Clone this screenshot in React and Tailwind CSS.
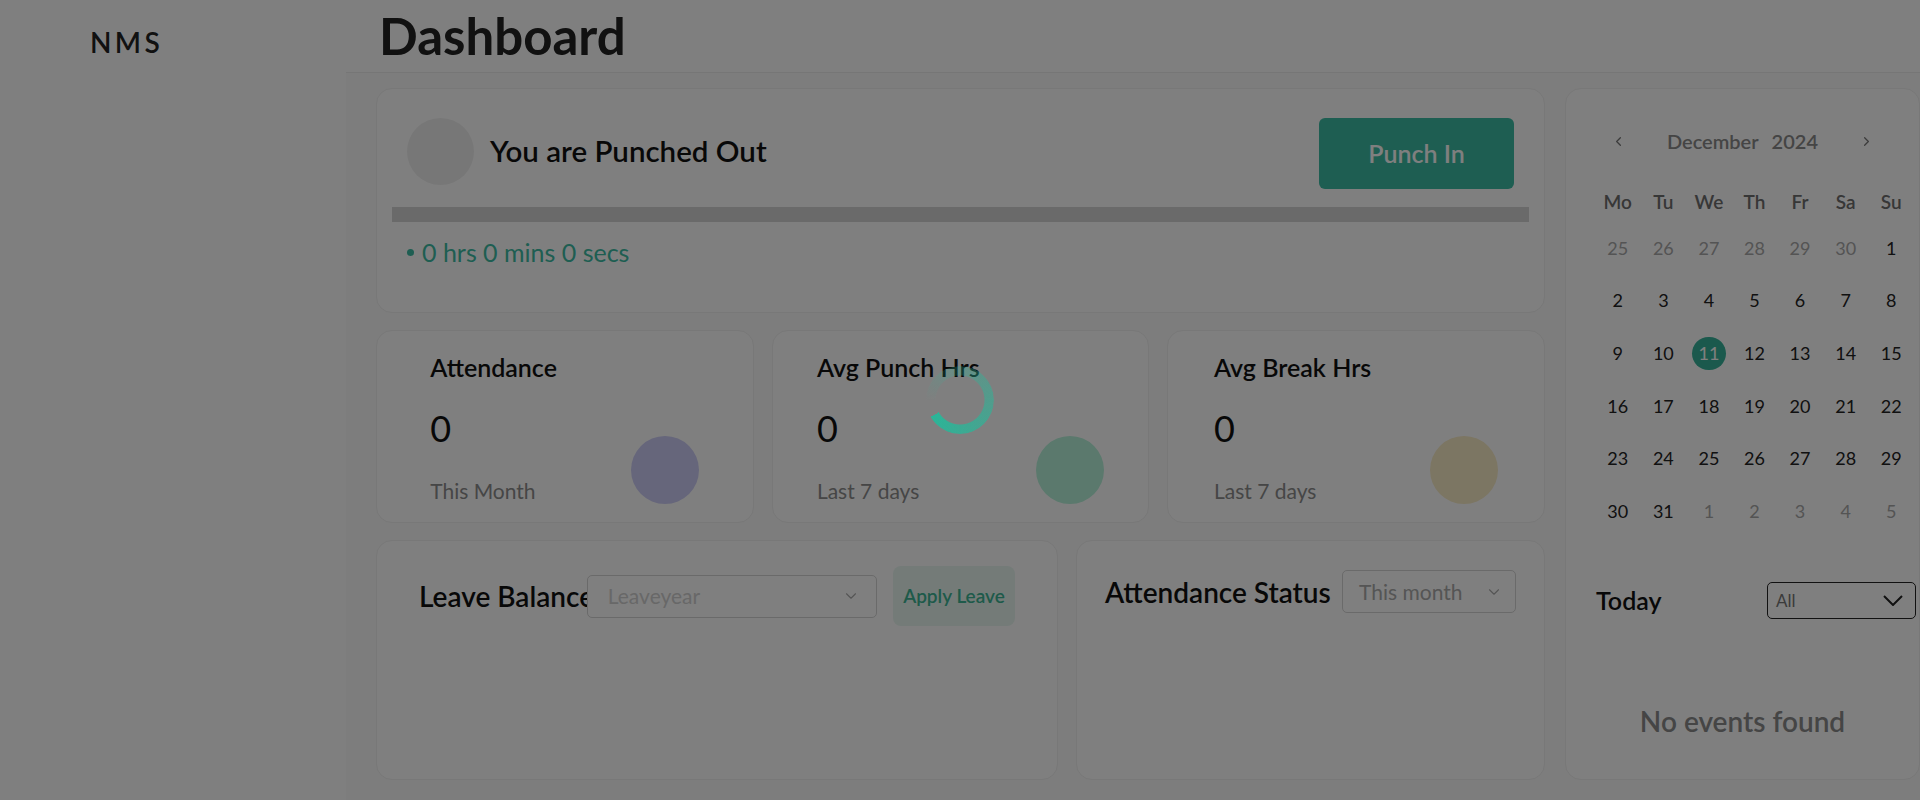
import React from "react";
import { ChevronDown, ChevronLeft, ChevronRight } from "lucide-react";

const weekDays = ["Mo", "Tu", "We", "Th", "Fr", "Sa", "Su"];

// december 2024, monday first
const calendarRows = [
  [[25, false], [26, false], [27, false], [28, false], [29, false], [30, false], [1, true]],
  [[2, true], [3, true], [4, true], [5, true], [6, true], [7, true], [8, true]],
  [[9, true], [10, true], [11, true], [12, true], [13, true], [14, true], [15, true]],
  [[16, true], [17, true], [18, true], [19, true], [20, true], [21, true], [22, true]],
  [[23, true], [24, true], [25, true], [26, true], [27, true], [28, true], [29, true]],
  [[30, true], [31, true], [1, false], [2, false], [3, false], [4, false], [5, false]],
];

const stats = [
  { title: "Attendance", value: "0", sub: "This Month", dot: "bg-[#cdcdf6]" },
  { title: "Avg Punch Hrs", value: "0", sub: "Last 7 days", dot: "bg-[#b6f2da]" },
  { title: "Avg Break Hrs", value: "0", sub: "Last 7 days", dot: "bg-[#f9ecc6]" },
];

const StatCard = ({ stat }) => (
  <div className="flex-1 rounded-2xl border border-[#f0f0f0] bg-white px-4 pt-6 pb-[18px] flex items-end justify-around">
    <div className="flex flex-col">
      <h3 className="text-[25px] leading-[30px] font-semibold text-[#111]">{stat.title}</h3>
      <p className="mt-[26px] text-[36px] leading-[40px] text-[#111]">{stat.value}</p>
      <p className="mt-[30px] text-[21px] leading-[26px] text-[#8c8c8c]">{stat.sub}</p>
    </div>
    <div className={`w-[68px] h-[68px] rounded-full ${stat.dot}`} />
  </div>
);

const PunchCard = () => (
  <div className="h-[225px] rounded-2xl border border-[#f0f0f0] bg-white px-[15px] pt-[24px]">
    <div className="flex items-center justify-between px-[15px]">
      <div className="flex items-center gap-[16px]">
        <div className="w-[67px] h-[67px] rounded-full bg-[#efefef]" />
        <span className="text-[29.5px] font-semibold text-[#111]">You are Punched Out</span>
      </div>
      <button className="mt-[5px] w-[195px] h-[71px] rounded-md bg-[#3cbca4] text-white text-[25px] font-semibold">
        Punch In
      </button>
    </div>
    <div className="mt-[18px] h-[15px] bg-[#d4d4d4]" />
    <div className="mt-[15px] px-[15px] flex items-center gap-2 text-[25px] leading-[30px] text-[#3cbca4]">
      <span className="w-[7px] h-[7px] rounded-full bg-[#3cbca4]" />
      <span>0 hrs 0 mins 0 secs</span>
    </div>
  </div>
);

const Calendar = () => (
  <div className="w-[355px] shrink-0 h-[692px] rounded-2xl border border-[#f0f0f0] bg-white pt-[36px]">
    <div className="h-8 flex items-center justify-center">
      <button className="w-[76px] flex justify-center text-[#777]">
        <ChevronLeft size={15} strokeWidth={2} />
      </button>
      <div className="w-[172px] flex justify-center gap-[13px] text-[20px] font-semibold text-[#8a8a8a]">
        <span>December</span>
        <span>2024</span>
      </div>
      <button className="w-[76px] flex justify-center text-[#777]">
        <ChevronRight size={15} strokeWidth={2} />
      </button>
    </div>
    <div className="ml-[29px] mt-[25px] w-[319px]">
      <div className="grid grid-cols-7 h-10 items-center text-center text-[19px] font-semibold text-[#6e6e6e]">
        {weekDays.map((d) => (
          <span key={d}>{d}</span>
        ))}
      </div>
      {calendarRows.map((row, i) => (
        <div key={i} className="grid grid-cols-7 h-[52.6px] items-center text-center text-[18px]">
          {row.map(([day, inMonth], j) => {
            const selected = inMonth && day === 11;
            return (
              <div key={j} className="flex justify-center">
                <span
                  className={
                    selected
                      ? "w-[34px] h-[33px] rounded-full bg-[#36b39a] text-white flex items-center justify-center"
                      : inMonth
                      ? "text-[#222]"
                      : "text-[#a8a8a8]"
                  }
                >
                  {day}
                </span>
              </div>
            );
          })}
        </div>
      ))}
    </div>
    <div className="mt-[44px] pl-[30px] pr-[3px] flex items-center justify-between">
      <span className="text-[25px] font-semibold text-[#111]">Today</span>
      <div className="w-[149px] h-[37px] rounded-[5px] border border-[#222] flex items-center justify-between pl-2 pr-3">
        <span className="text-[17px] text-[#777]">All</span>
        <svg width="20" height="11" viewBox="0 0 20 11" fill="none">
          <path d="M1 1l9 9 9-9" stroke="#222" strokeWidth="2" />
        </svg>
      </div>
    </div>
    <p className="mt-[84px] text-center text-[28px] leading-9 font-semibold text-[#8a8a8a]">No events found</p>
  </div>
);

const App = () => {
  return (
    <div className="relative flex w-[1920px] h-[800px] overflow-hidden bg-white font-['Lato',sans-serif]">
      <aside className="w-[346px] shrink-0 bg-white pl-[90px] pt-[24px]">
        <div className="text-[28px] leading-9 font-semibold tracking-[0.12em] text-[#222]">NMS</div>
      </aside>

      <main className="flex-1 min-w-0 flex flex-col">
        <header className="h-[73px] shrink-0 border-b border-[#ececec] pl-[33px] flex items-center">
          <h1 className="text-[51px] leading-[60px] font-bold text-[#222]">Dashboard</h1>
        </header>

        <div className="flex-1 bg-[#fafafa] pl-[30px] pt-[15px] flex gap-5">
          <div className="w-[1169px] shrink-0 flex flex-col gap-[17px]">
            <PunchCard />

            <div className="h-[193px] flex gap-[18px]">
              {stats.map((s) => (
                <StatCard key={s.title} stat={s} />
              ))}
            </div>

            <div className="h-[240px] flex gap-[18px]">
              <div className="w-[682px] rounded-2xl border border-[#f0f0f0] bg-white px-[42px] pt-[25px]">
                <div className="flex items-center">
                  <div className="w-[169px] overflow-hidden whitespace-nowrap text-[28px] font-semibold text-[#111]">
                    Leave Balance
                  </div>
                  <div className="w-[292px] h-[43px] rounded-[5px] border border-[#d4d4d4] bg-white flex items-center justify-between pl-5 pr-4">
                    <span className="text-[21px] text-[#d0d0d0]">Leaveyear</span>
                    <ChevronDown size={18} strokeWidth={1.5} className="text-[#aaa]" />
                  </div>
                  <button className="ml-4 w-[123px] h-[60px] rounded-lg bg-[#e8f7f1] text-[19px] font-semibold text-[#3cb594]">
                    Apply Leave
                  </button>
                </div>
              </div>

              <div className="flex-1 rounded-2xl border border-[#f0f0f0] bg-white px-[28px] pt-[29px]">
                <div className="flex items-center justify-between">
                  <span className="text-[28px] font-semibold text-[#111]">Attendance Status</span>
                  <div className="w-[174px] h-[43px] rounded-[5px] border border-[#d4d4d4] flex items-center justify-between pl-4 pr-3">
                    <span className="text-[21px] text-[#aaa]">This month</span>
                    <ChevronDown size={18} strokeWidth={1.5} className="text-[#aaa]" />
                  </div>
                </div>
              </div>
            </div>
          </div>

          <Calendar />
        </div>
      </main>

      {/* loading overlay */}
      <div className="fixed inset-0 z-40 bg-black/50" />
      <div className="fixed inset-0 z-50 flex items-center justify-center">
        <div className="w-[68px] h-[68px] rounded-full bg-[conic-gradient(from_240deg,transparent_8%,#2bb598)] [mask-image:radial-gradient(farthest-side,transparent_calc(100%_-_10px),#000_calc(100%_-_9px))]" />
      </div>
    </div>
  );
};

export default App;
